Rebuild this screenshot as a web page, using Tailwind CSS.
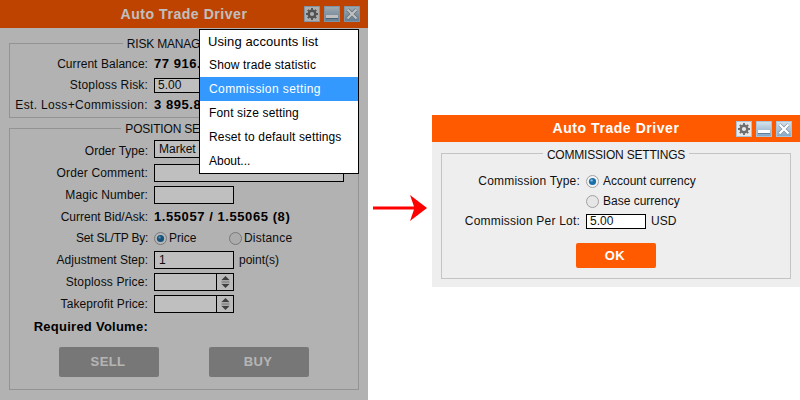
<!DOCTYPE html>
<html lang="en">
<head>
    <meta charset="UTF-8">
    <title>Auto Trade Driver</title>
    <script src="https://cdn.jsdelivr.net/npm/@tailwindcss/browser@4"></script>
</head>
<body class="bg-white font-['Liberation_Sans',Arial,sans-serif] text-[12px] text-[#111]">
<div class="flex w-[800px] h-[400px] overflow-hidden">

    <!-- main window, dimmed while the menu is open -->
    <div class="relative w-[368px] h-[400px] bg-[#eeeeee] shrink-0">
        <div class="grid grid-cols-[1fr_auto_1fr] items-center h-[28px] bg-[#ff5a00] px-[8px]">
            <div></div>
            <div class="font-bold text-[14px] tracking-[0.55px] text-white">Auto Trade Driver</div>
            <div class="flex justify-end gap-[4px]">
                <div class="w-[16px] h-[16px] bg-[#e8e8e8] border border-[#a9c4da] flex items-center justify-center">
                    <svg width="14" height="14" viewBox="0 0 14 14"><circle cx="7" cy="7" r="3.3" fill="none" stroke="#6f6f6f" stroke-width="2.4"/><path d="M7 1v2.4M7 10.6V13M1 7h2.4M10.6 7H13M2.8 2.8l1.7 1.7M9.5 9.5l1.7 1.7M2.8 11.2l1.7-1.7M9.5 4.5l1.7-1.7" stroke="#6f6f6f" stroke-width="1.9"/></svg>
                </div>
                <div class="w-[16px] h-[16px] bg-linear-to-b from-[#d3e1ec] to-[#86a9c6] border border-[#a9c4da] flex items-end justify-center pb-[2px]"><div class="w-[12px] h-[3px] bg-white border-b border-[#5f7f9a] box-content"></div></div>
                <div class="w-[16px] h-[16px] bg-linear-to-b from-[#d3e1ec] to-[#86a9c6] border border-[#a9c4da] flex items-center justify-center">
                    <svg width="14" height="14" viewBox="0 0 14 14"><path d="M2.5 2.5l9 9M11.5 2.5l-9 9" stroke="#7b8f9f" stroke-width="3.6"/><path d="M2.5 2.5l9 9M11.5 2.5l-9 9" stroke="#fff" stroke-width="2.4"/></svg>
                </div>
            </div>
        </div>

        <div class="px-[9px]">
            <fieldset class="mt-[7px] h-[83px] border border-[#c4c4c4] pt-[3px]">
                <legend class="mx-auto px-[4px] pt-[2px] text-[12px] leading-[14px] tracking-[-0.2px]">RISK MANAGEMENT</legend>
                <div class="flex items-center h-[20px] gap-[6px]">
                    <div class="w-[138px] text-right tracking-[0.05px]">Current Balance:</div>
                    <div class="font-bold text-[13px] tracking-[0.55px] text-black">77 916.22</div>
                </div>
                <div class="flex items-center h-[20px] gap-[6px] mt-[1px]">
                    <div class="w-[138px] text-right tracking-[0.15px]">Stoploss Risk:</div>
                    <div class="w-[80px] h-[15px] bg-white border border-black px-[3px] leading-[13px]">5.00</div>
                </div>
                <div class="flex items-center h-[20px] gap-[6px]">
                    <div class="w-[138px] text-right tracking-[0.33px]">Est. Loss+Commission:</div>
                    <div class="font-bold text-[13px] tracking-[0.55px] text-black">3 895.81</div>
                </div>
            </fieldset>

            <fieldset class="mt-[2px] h-[270px] border border-[#c4c4c4] pt-[4px]">
                <legend class="mx-auto px-[4px] pt-[2px] text-[12px] leading-[14px] tracking-[-0.2px]">POSITION SETTINGS</legend>
                <div class="flex flex-col gap-[4px]">
                    <div class="flex items-center h-[18px] gap-[6px]">
                        <div class="w-[138px] text-right pt-[3px]">Order Type:</div>
                        <div class="w-[160px] h-[18px] bg-white border border-black px-[4px] leading-[16px]">Market</div>
                    </div>
                    <div class="flex items-center h-[18px] gap-[6px] mt-[2px]">
                        <div class="w-[138px] text-right tracking-[0.15px]">Order Comment:</div>
                        <div class="w-[190px] h-[18px] bg-white border border-black"></div>
                    </div>
                    <div class="flex items-center h-[18px] gap-[6px]">
                        <div class="w-[138px] text-right tracking-[0.1px]">Magic Number:</div>
                        <div class="w-[80px] h-[18px] bg-white border border-black"></div>
                    </div>
                    <div class="flex items-center h-[18px] gap-[6px]">
                        <div class="w-[138px] text-right">Current Bid/Ask:</div>
                        <div class="font-bold text-[13px] tracking-[0.57px] text-black">1.55057 / 1.55065 (8)</div>
                    </div>
                    <div class="flex items-center h-[18px] gap-[6px] mt-[-1px]">
                        <div class="w-[138px] text-right tracking-[-0.25px]">Set SL/TP By:</div>
                        <div class="flex items-center w-[75px] gap-[2px]">
                            <svg width="13" height="13" viewBox="0 0 13 13"><circle cx="6.5" cy="6.5" r="6" fill="#f4f4f4" stroke="#a0a0a0"/><circle cx="6.5" cy="6.5" r="3.6" fill="#1b6ea6"/><circle cx="5.6" cy="5.4" r="1.2" fill="#7fc0ea"/></svg>
                            <span>Price</span>
                        </div>
                        <div class="flex items-center gap-[2px] ml-[-6px]">
                            <svg width="13" height="13" viewBox="0 0 13 13"><circle cx="6.5" cy="6.5" r="6" fill="#e6e6e6" stroke="#a0a0a0"/></svg>
                            <span class="tracking-[0.2px]">Distance</span>
                        </div>
                    </div>
                    <div class="flex items-center h-[18px] gap-[6px]">
                        <div class="w-[138px] text-right">Adjustment Step:</div>
                        <div class="w-[80px] h-[18px] bg-white border border-black px-[4px] leading-[16px]">1</div>
                        <span class="ml-[-1px]">point(s)</span>
                    </div>
                    <div class="flex items-center h-[18px] gap-[6px]">
                        <div class="w-[138px] text-right tracking-[0.15px]">Stoploss Price:</div>
                        <div class="flex w-[80px] h-[18px] bg-white border border-black">
                            <div class="flex-1"></div>
                            <div class="w-[17px] bg-[#fafafa] border-l border-black flex items-center justify-center">
                                <svg width="11" height="14" viewBox="0 0 11 14"><path d="M5.5 1L9.5 5H1.5zM5.5 13L1.5 9h8z" fill="#555"/><path d="M1.5 6.2h8M1.5 7.8h8" stroke="#aaa"/></svg>
                            </div>
                        </div>
                    </div>
                    <div class="flex items-center h-[18px] gap-[6px]">
                        <div class="w-[138px] text-right tracking-[0.08px]">Takeprofit Price:</div>
                        <div class="flex w-[80px] h-[18px] bg-white border border-black">
                            <div class="flex-1"></div>
                            <div class="w-[17px] bg-[#fafafa] border-l border-black flex items-center justify-center">
                                <svg width="11" height="14" viewBox="0 0 11 14"><path d="M5.5 1L9.5 5H1.5zM5.5 13L1.5 9h8z" fill="#555"/><path d="M1.5 6.2h8M1.5 7.8h8" stroke="#aaa"/></svg>
                            </div>
                        </div>
                    </div>
                    <div class="flex items-center h-[18px] gap-[6px] mt-[1px]">
                        <div class="w-[138px] text-right font-bold text-[13px] tracking-[0.25px] text-black">Required Volume:</div>
                    </div>
                </div>
                <div class="flex gap-[50px] mt-[11px] pl-[49px]">
                    <div class="w-[100px] h-[30px] rounded-[2px] bg-[#9f9f9f] flex items-center justify-center pr-[2px] font-bold text-[13px] tracking-[0.4px] text-[#f2f2f2]">SELL</div>
                    <div class="w-[100px] h-[30px] rounded-[2px] bg-[#9f9f9f] flex items-center justify-center pr-[2px] font-bold text-[13px] tracking-[0.4px] text-[#f2f2f2]">BUY</div>
                </div>
            </fieldset>
        </div>

        <div class="absolute inset-0 bg-black/25"></div>

        <!-- context menu -->
        <div class="absolute left-[199px] top-[29px] w-[160px] h-[145px] bg-white border border-black text-[12px] text-black">
            <div class="h-[23px] pl-[8px] flex items-center text-[13px] tracking-[0.1px]">Using accounts list</div>
            <div class="h-[24px] pl-[9px] flex items-center tracking-[0.15px]">Show trade statistic</div>
            <div class="h-[24px] pl-[9px] flex items-center tracking-[0.4px] bg-[#3399ff] text-white">Commission setting</div>
            <div class="h-[24px] pl-[9px] flex items-center tracking-[0.15px]">Font size setting</div>
            <div class="h-[24px] pl-[9px] flex items-center tracking-[0.15px]">Reset to default settings</div>
            <div class="h-[24px] pl-[9px] flex items-center">About...</div>
        </div>
    </div>

    <!-- arrow between the two windows -->
    <div class="w-[64px] shrink-0 flex items-center pl-[5px]">
        <svg class="mt-[16px]" width="54" height="26" viewBox="0 0 54 26"><path d="M0 11.5h41L37 0l17 13-17 13 4-11.5H0z" fill="#ff0000"/></svg>
    </div>

    <!-- commission settings window -->
    <div class="w-[368px] h-[172px] mt-[115px] bg-[#eeeeee] shrink-0">
        <div class="grid grid-cols-[1fr_auto_1fr] items-center h-[27px] bg-[#ff5a00] px-[8px]">
            <div></div>
            <div class="font-bold text-[14px] tracking-[0.55px] text-white">Auto Trade Driver</div>
            <div class="flex justify-end gap-[4px]">
                <div class="w-[16px] h-[16px] bg-[#e8e8e8] border border-[#a9c4da] flex items-center justify-center">
                    <svg width="14" height="14" viewBox="0 0 14 14"><circle cx="7" cy="7" r="3.3" fill="none" stroke="#6f6f6f" stroke-width="2.4"/><path d="M7 1v2.4M7 10.6V13M1 7h2.4M10.6 7H13M2.8 2.8l1.7 1.7M9.5 9.5l1.7 1.7M2.8 11.2l1.7-1.7M9.5 4.5l1.7-1.7" stroke="#6f6f6f" stroke-width="1.9"/></svg>
                </div>
                <div class="w-[16px] h-[16px] bg-linear-to-b from-[#d3e1ec] to-[#86a9c6] border border-[#a9c4da] flex items-end justify-center pb-[2px]"><div class="w-[12px] h-[3px] bg-white border-b border-[#5f7f9a] box-content"></div></div>
                <div class="w-[16px] h-[16px] bg-linear-to-b from-[#d3e1ec] to-[#86a9c6] border border-[#a9c4da] flex items-center justify-center">
                    <svg width="14" height="14" viewBox="0 0 14 14"><path d="M2.5 2.5l9 9M11.5 2.5l-9 9" stroke="#7b8f9f" stroke-width="3.6"/><path d="M2.5 2.5l9 9M11.5 2.5l-9 9" stroke="#fff" stroke-width="2.4"/></svg>
                </div>
            </div>
        </div>
        <div class="px-[9px]">
            <fieldset class="mt-[2px] h-[135px] border border-[#c4c4c4] pt-[9px]">
                <legend class="mx-auto px-[4px] pt-[4px] text-[12px] leading-[14px] tracking-[-0.2px]">COMMISSION SETTINGS</legend>
                <div class="flex items-center h-[20px] gap-[6px]">
                    <div class="w-[138px] text-right tracking-[0.2px]">Commission Type:</div>
                    <div class="flex items-center gap-[4px]">
                        <svg width="13" height="13" viewBox="0 0 13 13"><circle cx="6.5" cy="6.5" r="6" fill="#f4f4f4" stroke="#a0a0a0"/><circle cx="6.5" cy="6.5" r="3.6" fill="#1b6ea6"/><circle cx="5.6" cy="5.4" r="1.2" fill="#7fc0ea"/></svg>
                        <span>Account currency</span>
                    </div>
                </div>
                <div class="flex items-center h-[20px] gap-[6px]">
                    <div class="w-[138px]"></div>
                    <div class="flex items-center gap-[4px]">
                        <svg width="13" height="13" viewBox="0 0 13 13"><circle cx="6.5" cy="6.5" r="6" fill="#e6e6e6" stroke="#a0a0a0"/></svg>
                        <span>Base currency</span>
                    </div>
                </div>
                <div class="flex items-center h-[20px] gap-[6px]">
                    <div class="w-[138px] text-right tracking-[0.2px]">Commission Per Lot:</div>
                    <div class="w-[60px] h-[15px] bg-white border border-black px-[3px] leading-[13px]">5.00</div>
                    <span class="ml-[-1px]">USD</span>
                </div>
                <div class="flex justify-center mt-[12px]">
                    <div class="w-[80px] h-[25px] rounded-[2px] bg-[#ff5a00] flex items-center justify-center pr-[2px] font-bold text-[13px] tracking-[0.4px] text-white">OK</div>
                </div>
            </fieldset>
        </div>
    </div>
</div>
</body>
</html>
